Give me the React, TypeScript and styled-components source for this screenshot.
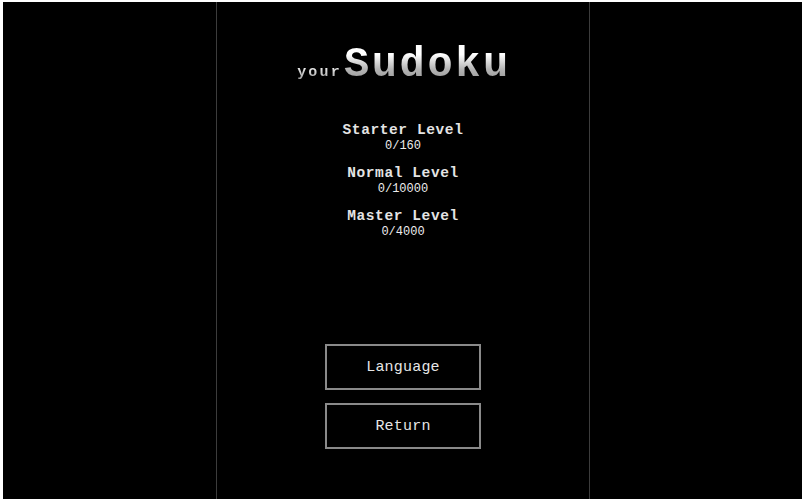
import React from "react";
import styled, { createGlobalStyle } from "styled-components";

const Global = createGlobalStyle`
  html, body { margin: 0; padding: 0; background: #ffffff; }
  body { font-family: "Liberation Mono", "Courier New", monospace; }
`;

const Frame = styled.div`
  padding: 2px 1px 4px 3px;
  width: 803px;
  height: 503px;
  box-sizing: border-box;
`;

const Stage = styled.div`
  background: #000;
  height: 100%;
  display: flex;
  justify-content: flex-start;
  padding-left: 213px;
  box-sizing: border-box;
`;

const Column = styled.div`
  width: 374px;
  box-sizing: border-box;
  border-left: 1px solid #3c3c3c;
  border-right: 1px solid #3c3c3c;
  display: flex;
  flex-direction: column;
  align-items: center;
  padding-top: 42px;
`;

const Title = styled.h1`
  margin: 0;
  display: flex;
  align-items: baseline;
  font-family: "Liberation Mono", "Courier New", monospace;
  font-weight: bold;
  line-height: 1;
  height: 40px;
  padding-left: 2px;
`;

const TitleSmall = styled.span`
  font-size: 15px;
  letter-spacing: 2.2px;
  background: linear-gradient(#ffffff, #9a9a9a);
  -webkit-background-clip: text;
  background-clip: text;
  color: transparent;
`;

const TitleBig = styled.span`
  font-size: 42px;
  letter-spacing: 2.6px;
  margin-left: 2px;
  background: linear-gradient(180deg, #ffffff 25%, #b4b4b4 60%, #8c8c8c 100%);
  -webkit-background-clip: text;
  background-clip: text;
  color: transparent;
`;

const Stats = styled.div`
  margin-top: 38px;
  display: flex;
  flex-direction: column;
  align-items: center;
  gap: 12px;
`;

const Stat = styled.div`
  display: flex;
  flex-direction: column;
  align-items: center;
  color: #e4e4e4;
`;

const StatName = styled.div`
  font-size: 14.5px;
  letter-spacing: 0.6px;
  font-weight: bold;
  line-height: 17px;
`;

const StatValue = styled.div`
  font-size: 12px;
  line-height: 14px;
  color: #ececec;
`;

const Buttons = styled.div`
  margin-top: auto;
  margin-bottom: 50px;
  display: flex;
  flex-direction: column;
  gap: 13px;
`;

const Button = styled.button`
  width: 156px;
  height: 46px;
  box-sizing: border-box;
  background: #000;
  border: 2px solid #8a8a8a;
  color: #e6e6e6;
  font-family: "Liberation Mono", "Courier New", monospace;
  font-size: 15px;
  letter-spacing: 0.2px;
  cursor: pointer;
  padding: 0;
`;

const levels = [
  { name: "Starter Level", value: "0/160" },
  { name: "Normal Level", value: "0/10000" },
  { name: "Master Level", value: "0/4000" },
];

export default function App() {
  return (
    <>
      <Global />
      <Frame>
        <Stage>
          <Column>
            <Title>
              <TitleSmall>your</TitleSmall>
              <TitleBig>Sudoku</TitleBig>
            </Title>
            <Stats>
              {levels.map((l) => (
                <Stat key={l.name}>
                  <StatName>{l.name}</StatName>
                  <StatValue>{l.value}</StatValue>
                </Stat>
              ))}
            </Stats>
            <Buttons>
              <Button>Language</Button>
              <Button>Return</Button>
            </Buttons>
          </Column>
        </Stage>
      </Frame>
    </>
  );
}
